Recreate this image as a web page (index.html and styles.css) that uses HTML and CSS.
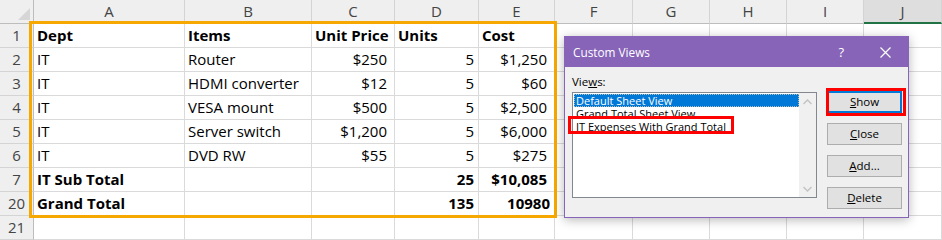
FILE: index.html
```html
<!DOCTYPE html>
<html>
<head>
<meta charset="utf-8">
<link rel="stylesheet" href="styles.css">
</head>
<body>
<div class="page">
  <div class="sheet">
    <div class="corner"><svg width="34" height="24" viewBox="0 0 34 24"><polygon points="30,8 30,20 18,20" fill="#d6d6d6"/></svg></div>
    <div class="ch">A</div><div class="ch">B</div><div class="ch">C</div><div class="ch">D</div><div class="ch">E</div><div class="ch">F</div><div class="ch">G</div><div class="ch">H</div><div class="ch">I</div><div class="ch active">J</div>

    <div class="rh">1</div><div class="c b">Dept</div><div class="c b">Items</div><div class="c b">Unit Price</div><div class="c b">Units</div><div class="c b">Cost</div><div class="c"></div><div class="c"></div><div class="c"></div><div class="c"></div><div class="c"></div>
    <div class="rh">2</div><div class="c">IT</div><div class="c">Router</div><div class="c r cur">$250</div><div class="c r">5</div><div class="c r cur">$1,250</div><div class="c"></div><div class="c"></div><div class="c"></div><div class="c"></div><div class="c"></div>
    <div class="rh">3</div><div class="c">IT</div><div class="c">HDMI converter</div><div class="c r cur">$12</div><div class="c r">5</div><div class="c r cur">$60</div><div class="c"></div><div class="c"></div><div class="c"></div><div class="c"></div><div class="c"></div>
    <div class="rh">4</div><div class="c">IT</div><div class="c">VESA mount</div><div class="c r cur">$500</div><div class="c r">5</div><div class="c r cur">$2,500</div><div class="c"></div><div class="c"></div><div class="c"></div><div class="c"></div><div class="c"></div>
    <div class="rh">5</div><div class="c">IT</div><div class="c">Server switch</div><div class="c r cur">$1,200</div><div class="c r">5</div><div class="c r cur">$6,000</div><div class="c"></div><div class="c"></div><div class="c"></div><div class="c"></div><div class="c"></div>
    <div class="rh">6</div><div class="c">IT</div><div class="c">DVD RW</div><div class="c r cur">$55</div><div class="c r">5</div><div class="c r cur">$275</div><div class="c"></div><div class="c"></div><div class="c"></div><div class="c"></div><div class="c"></div>
    <div class="rh">7</div><div class="c b">IT Sub Total</div><div class="c"></div><div class="c"></div><div class="c r b">25</div><div class="c r b cur">$10,085</div><div class="c"></div><div class="c"></div><div class="c"></div><div class="c"></div><div class="c"></div>
    <div class="rh">20</div><div class="c b">Grand Total</div><div class="c"></div><div class="c"></div><div class="c r b">135</div><div class="c r b">10980</div><div class="c"></div><div class="c"></div><div class="c"></div><div class="c"></div><div class="c"></div>
    <div class="rh">21</div><div class="c"></div><div class="c"></div><div class="c"></div><div class="c"></div><div class="c"></div><div class="c"></div><div class="c"></div><div class="c"></div><div class="c"></div><div class="c"></div>
  </div>

  <div class="selection"></div>

  <div class="dialog">
    <div class="titlebar">
      <span class="title">Custom Views</span>
      <span class="help">?</span>
      <svg class="close-x" width="11" height="11" viewBox="0 0 11 11"><path d="M0.5 0.5 L10.5 10.5 M10.5 0.5 L0.5 10.5" stroke="#fff" stroke-width="1.2" fill="none"/></svg>
    </div>
    <div class="body">
      <div class="left">
        <div class="label">Vie<u>w</u>s:</div>
        <div class="listbox">
          <div class="items">
            <div class="item selected">Default Sheet View</div>
            <div class="item">Grand Total Sheet View</div>
            <div class="item">IT Expenses With Grand Total</div>
          </div>
          <div class="scrollbar">
            <svg width="9" height="6" viewBox="0 0 9 6"><path d="M0.5 5 L4.5 1 L8.5 5" stroke="#c4c4c4" stroke-width="1.5" fill="none"/></svg>
            <svg width="9" height="6" viewBox="0 0 9 6"><path d="M0.5 1 L4.5 5 L8.5 1" stroke="#c4c4c4" stroke-width="1.5" fill="none"/></svg>
          </div>
        </div>
      </div>
      <div class="buttons">
        <div class="btn default"><u>S</u>how</div>
        <div class="btn"><u>C</u>lose</div>
        <div class="btn"><u>A</u>dd...</div>
        <div class="btn"><u>D</u>elete</div>
      </div>
    </div>
    <div class="mark mark-item"></div>
    <div class="mark mark-show"></div>
  </div>
</div>
</body>
</html>
```

FILE: styles.css
```css
html, body {
  margin: 0;
  padding: 0;
  background: #ffffff;
}
.page {
  position: relative;
  width: 942px;
  height: 240px;
  overflow: hidden;
}
.sheet {
  display: grid;
  grid-template-columns: 34px 151px 127px 83px 84px 76px 78px 77px 77px 77px 78px;
  grid-auto-rows: 24px;
  font-family: "Open Sans", "Noto Sans", sans-serif;
  font-size: 15px;
  color: #000;
}
.sheet > div {
  box-sizing: border-box;
  border-right: 1px solid #dadada;
  border-bottom: 1px solid #dadada;
  white-space: nowrap;
  overflow: hidden;
}
.corner {
  background: #efefef;
  border-right: 1px solid #bdbdbd !important;
  border-bottom: 1px solid #bdbdbd !important;
}
.corner svg { display: block; }
.ch {
  background: #efefef;
  color: #444;
  text-align: center;
  line-height: 23px;
  border-right: 1px solid #d4d4d4 !important;
  border-bottom: 1px solid #bdbdbd !important;
}
.ch.active {
  background: #dedede;
  border-bottom: 2px solid #217346 !important;
  line-height: 22px;
}
.rh {
  background: #efefef;
  color: #444;
  text-align: center;
  line-height: 23px;
  border-right: 1px solid #bdbdbd !important;
  border-bottom: 1px solid #d4d4d4 !important;
}
.c {
  line-height: 23px;
  padding: 0 3px;
}
.c.b { font-weight: 700; }
.c.r { text-align: right; padding-right: 4px; }
.c.r.cur { padding-right: 7px; }

.selection {
  position: absolute;
  left: 29px;
  top: 21px;
  width: 528px;
  height: 197px;
  box-sizing: border-box;
  border: 3px solid #f6a800;
  pointer-events: none;
}

.dialog {
  position: absolute;
  left: 564px;
  top: 36px;
  width: 345px;
  height: 182px;
  box-sizing: border-box;
  border: 1px solid #8764b8;
  background: #f0f0f0;
  box-shadow: 0 2px 10px rgba(0, 0, 0, 0.28);
  font-family: "Open Sans", "Noto Sans", sans-serif;
  font-size: 11.5px;
  color: #000;
  display: flex;
  flex-direction: column;
}
.titlebar {
  height: 30px;
  background: #8764b8;
  color: #fff;
  display: flex;
  align-items: center;
  padding-left: 8px;
  padding-right: 17px;
}
.title {
  flex: 1;
  font-size: 11.8px;
}
.help {
  font-size: 13px;
  margin-right: 36px;
}
.close-x { display: block; }

.body {
  flex: 1;
  display: flex;
  padding: 7px 6px 0 7px;
}
.left {
  width: 245px;
  display: flex;
  flex-direction: column;
}
.label {
  line-height: 16px;
  height: 16px;
}
.label u { text-underline-offset: 1px; }
.listbox {
  margin-top: 2px;
  height: 106px;
  box-sizing: border-box;
  border: 1px solid #828790;
  background: #fff;
  display: flex;
}
.items {
  flex: 1;
  padding: 1px 0 0 1px;
  font-size: 11px;
}
.item {
  height: 13px;
  line-height: 13px;
  padding-left: 2px;
  white-space: nowrap;
  overflow: hidden;
}
.item.selected {
  background: #0078d7;
  color: #fff;
  outline: 1px dotted rgba(255, 220, 160, 0.7);
  outline-offset: -1px;
}
.scrollbar {
  width: 17px;
  background: #f0f0f0;
  display: flex;
  flex-direction: column;
  justify-content: space-between;
  align-items: center;
  padding: 6px 0 5px;
  box-sizing: border-box;
}
.scrollbar svg { display: block; }

.buttons {
  margin-left: 10px;
  padding-top: 17px;
  display: flex;
  flex-direction: column;
  gap: 10px;
}
.btn {
  width: 75px;
  height: 22px;
  box-sizing: border-box;
  border: 1px solid #adadad;
  background: #e1e1e1;
  text-align: center;
  line-height: 20px;
}
.btn.default {
  border: 2px solid #0078d7;
  line-height: 18px;
}
.mark {
  position: absolute;
  box-sizing: border-box;
  border: 3px solid #ff0000;
}
.mark-item {
  left: 3px;
  top: 79px;
  width: 166px;
  height: 18px;
}
.mark-show {
  left: 261px;
  top: 51px;
  width: 80px;
  height: 28px;
}
```
